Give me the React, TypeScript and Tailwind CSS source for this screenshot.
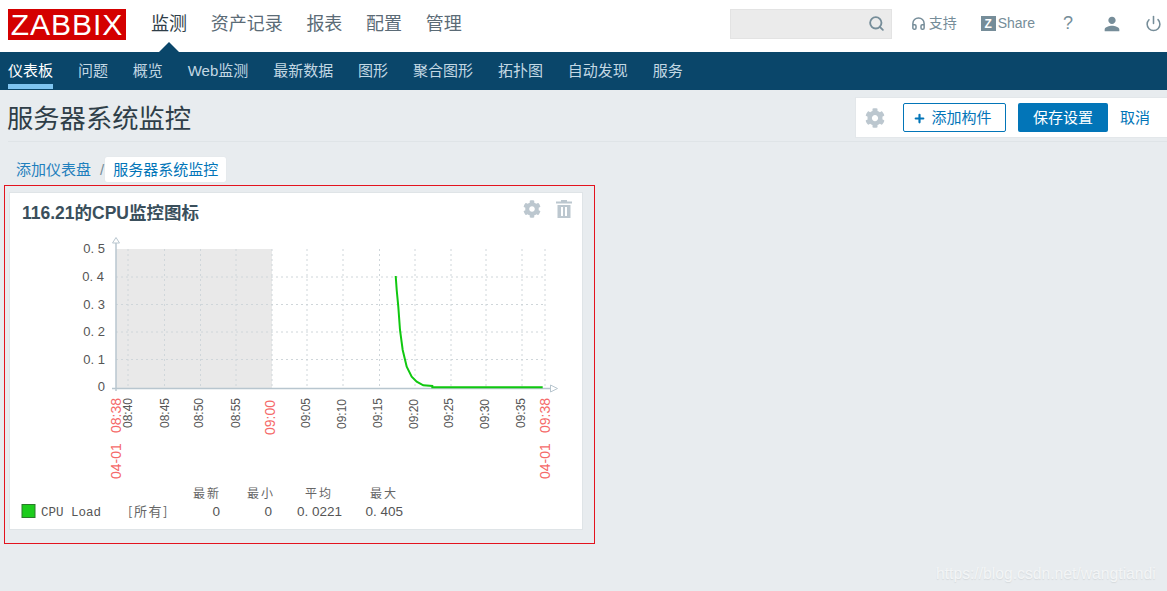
import React from 'react';
import { Search, Headphones, Power, Plus } from 'lucide-react';
import { FaCog } from 'react-icons/fa';
import { MdPerson } from 'react-icons/md';

const FONT = '[font-family:"Liberation_Sans","Noto_Sans_CJK_SC",sans-serif]';

const topNav = ['监测', '资产记录', '报表', '配置', '管理'];
const subNav = ['仪表板', '问题', '概览', 'Web监测', '最新数据', '图形', '聚合图形', '拓扑图', '自动发现', '服务'];

const gridX = [128, 164.5, 200.5, 236, 272, 307, 343, 379.5, 415, 451, 486, 522, 545];
const gridY = [277, 304.5, 332, 359.5];
const yLabels = [
  { t: '0. 5', x: 105, y: 253 },
  { t: '0. 4', x: 104, y: 281 },
  { t: '0. 3', x: 105, y: 309 },
  { t: '0. 2', x: 105, y: 336 },
  { t: '0. 1', x: 105, y: 364 },
  { t: '0', x: 105, y: 391 },
];
const timeLabels = [
  { t: '08:40', x: 132, top: 428 },
  { t: '08:45', x: 168.5, top: 428 },
  { t: '08:50', x: 203, top: 428 },
  { t: '08:55', x: 239.5, top: 428 },
  { t: '09:05', x: 310, top: 428 },
  { t: '09:10', x: 345.5, top: 429 },
  { t: '09:15', x: 382, top: 428 },
  { t: '09:20', x: 418, top: 429 },
  { t: '09:25', x: 453, top: 428 },
  { t: '09:30', x: 489, top: 429 },
  { t: '09:35', x: 525, top: 428 },
];
const redLabels = [
  { t: '04-01', x: 120.5, top: 479 },
  { t: '08:38', x: 120.5, top: 433 },
  { t: '09:00', x: 274.5, top: 435 },
  { t: '04-01', x: 549.5, top: 479 },
  { t: '09:38', x: 549.5, top: 433 },
];
const curve =
  '395.7,276 396.7,290 398.3,306.7 400,330 402.7,350 406.7,366.7 411.7,376.7 416.7,381.7 423.3,385.3 432.3,386 432.3,387.3 542.7,387.3';

const Chart = () => (
  <svg viewBox="10 230 572 298" width={572} height={298} className="block">
    <rect x={116} y={249} width={156} height={139} fill="#e9e9e9" />
    {gridX.map(x => (
      <line key={x} x1={x} x2={x} y1={249} y2={388} stroke="#cfd6da" strokeDasharray="2 3" />
    ))}
    {gridY.map(y => (
      <line key={y} x1={116} x2={545} y1={y} y2={y} stroke="#cfd6da" strokeDasharray="2 3" />
    ))}
    {/* axes */}
    <line x1={116} x2={116} y1={243} y2={391} stroke="#b8c6cf" strokeWidth={1.5} />
    <line x1={112} x2={551} y1={388.5} y2={388.5} stroke="#b8c6cf" strokeWidth={1.5} />
    <polygon points="116,237.5 112.5,243 119.5,243" fill="#fff" stroke="#b8c6cf" />
    <polygon points="557.5,388.5 550.5,385 550.5,392" fill="#fff" stroke="#b8c6cf" />
    <polyline points={curve} fill="none" stroke="#10c810" strokeWidth={2} />
    {/* y labels */}
    <g fontFamily='"Liberation Sans", sans-serif' fontSize={13} fill="#555" textAnchor="end">
      {yLabels.map(l => (
        <text key={l.t} x={l.x} y={l.y}>{l.t}</text>
      ))}
    </g>
    {/* x labels */}
    <g fontFamily='"Liberation Sans", sans-serif' fontSize={12} fill="#555">
      {timeLabels.map(l => (
        <text key={l.t} transform={`translate(${l.x} ${l.top}) rotate(-90)`}>{l.t}</text>
      ))}
    </g>
    <g fontFamily='"Liberation Sans", sans-serif' fontSize={14} fill="#f56a6a">
      {redLabels.map(l => (
        <text key={`${l.t}-${l.x}`} transform={`translate(${l.x} ${l.top}) rotate(-90)`}>{l.t}</text>
      ))}
    </g>
    {/* legend */}
    <g fontFamily='"Noto Sans CJK SC", sans-serif' fontSize={12} fill="#666">
      <text x={193} y={498} letterSpacing={2}>最新</text>
      <text x={247} y={498} letterSpacing={2}>最小</text>
      <text x={305} y={498} letterSpacing={2}>平均</text>
      <text x={370} y={498} letterSpacing={2}>最大</text>
      <text x={128} y={516} fontSize={13} letterSpacing={1.5}>[所有]</text>
    </g>
    <rect x={22} y={504.5} width={13} height={13} fill="#1ccc1c" stroke="#2a7a2a" />
    <text x={41} y={516} fontFamily='"Liberation Mono", monospace' fontSize={12.5} fill="#555">CPU Load</text>
    <g fontFamily='"Liberation Sans", sans-serif' fontSize={13.5} fill="#555" textAnchor="end">
      <text x={220} y={516}>0</text>
      <text x={272} y={516}>0</text>
      <text x={342} y={516}>0. 0221</text>
      <text x={403} y={516}>0. 405</text>
    </g>
  </svg>
);

const TrashIcon = () => (
  <svg viewBox="0 0 16 18" width={16} height={18} fill="#bcc7cf">
    <rect x={0} y={1.5} width={16} height={2} />
    <rect x={5} y={0} width={6} height={2} />
    <path d="M1.5 5h13v13h-13z M5 7v9h2V7z M9 7v9h2V7z" fillRule="evenodd" />
  </svg>
);

export default function App() {
  return (
    <div className={`relative h-[591px] w-[1167px] overflow-hidden bg-[#e8ecef] ${FONT}`}>
      {/* Top bar */}
      <div className="relative flex h-[52px] items-center bg-white pb-[3px]">
        <div className="ml-2 flex h-[31px] w-[118px] items-center justify-center bg-[#d40000] text-[30px] tracking-[1px] text-white">
          ZABBIX
        </div>
        <div className="ml-[25px] flex gap-[23.7px] text-[18px] text-[#5b6b76]">
          {topNav.map((item, i) => (
            <span key={item} className={i === 0 ? 'text-[#2f3e48]' : ''}>{item}</span>
          ))}
        </div>
        <div className="absolute bottom-0 left-[159px] h-0 w-0 border-x-[10px] border-b-[10px] border-x-transparent border-b-[#0a466a]" />
        <div className="mb-[2px] ml-auto flex items-center text-[14px] text-[#768d99]">
          <div className="flex h-[30px] w-[162px] items-center justify-end border border-[#e3e3e3] bg-[#ebebeb] pr-[6px]">
            <Search size={17} strokeWidth={2.6} className="text-[#768d99]" />
          </div>
          <div className="ml-[19px] flex items-center gap-[3px]">
            <Headphones size={15} strokeWidth={2.4} />
            <span>支持</span>
          </div>
          <div className="ml-6 flex items-center gap-[2px]">
            <span className="flex h-[15px] w-[15px] items-center justify-center bg-[#768d99] text-[12px] font-bold text-white">Z</span>
            <span>Share</span>
          </div>
          <span className="ml-[27px] w-[12px] text-center text-[18px]">?</span>
          <MdPerson size={22} className="ml-[27px]" />
          <Power size={17} strokeWidth={2.2} className="ml-[22px] mr-[5px]" />
        </div>
      </div>

      {/* Sub nav */}
      <div className="flex h-[38px] gap-[24.9px] bg-[#0a466a] pl-2 text-[15px] text-[#c3d8e4]">
        {subNav.map((item, i) => (
          <span
            key={item}
            className={`flex h-[37px] items-center border-b-[5px] pt-[6px] ${i === 0 ? 'border-[#7fc4f0] text-white' : 'border-transparent'}`}
          >
            {item}
          </span>
        ))}
      </div>

      {/* Title row */}
      <div className="ml-2 flex h-[52px] items-start justify-between border-b border-[#dfe4e7]">
        <h1 className="ml-[-1px] mt-[11px] text-[26.3px] leading-[36px] font-normal text-[#2f3e48]">服务器系统监控</h1>
        <div className="mt-[7px] flex h-[41px] w-[312px] items-center border border-r-0 border-[#e3e7ea] bg-white pl-[9px] text-[15px]">
          <FaCog size={20} className="text-[#bcc7cf]" />
          <button className="ml-[18px] flex h-[29px] w-[103px] items-center justify-center gap-[5px] rounded-[2px] border border-[#0275b8] pr-[4px] pt-[1px] text-[#0275b8]">
            <Plus size={13} strokeWidth={4} />
            <span>添加构件</span>
          </button>
          <button className="ml-3 h-[29px] w-[90px] rounded-[2px] bg-[#0275b8] pt-[1px] text-white">保存设置</button>
          <span className="ml-3 pt-[1px] text-[#0275b8]">取消</span>
        </div>
      </div>

      {/* Tabs */}
      <div className="mt-[15px] flex h-[25px] items-center pl-4 text-[15px]">
        <span className="pt-[2px] text-[#1f7fbd]">添加仪表盘</span>
        <span className="ml-[9px] pt-[2px] text-[#768d99]">/</span>
        <span className="ml-[1px] flex h-[25px] w-[121px] items-center justify-center rounded-[2px] bg-white pt-[2px] text-[#0275b8] shadow-[0_0_1px_#d5dade]">
          服务器系统监控
        </span>
      </div>

      {/* Highlighted widget */}
      <div className="mt-[3px] ml-1 h-[359px] w-[591px] border border-[#e3131e] pl-1 pt-[6px]">
        <div className="h-[338px] w-[574px] overflow-hidden border border-[#dfe4e7] bg-white">
          <div className="flex h-[37px] items-center justify-between pl-[12px] pr-[10px]">
            <span className="mt-[3px] text-[17.5px] font-bold text-[#3a4f5c]">116.21的CPU监控图标</span>
            <div className="mb-[6px] flex items-center gap-[15px]">
              <FaCog size={18} className="text-[#bcc7cf]" />
              <TrashIcon />
            </div>
          </div>
          <Chart />
        </div>
      </div>

      {/* Watermark */}
      <span className="absolute left-[936px] top-[562px] text-[15.7px] text-[#f3f5f6] [text-shadow:0_1px_1px_#d5d9dc]">
        https://blog.csdn.net/wangtiandi
      </span>
    </div>
  );
}
